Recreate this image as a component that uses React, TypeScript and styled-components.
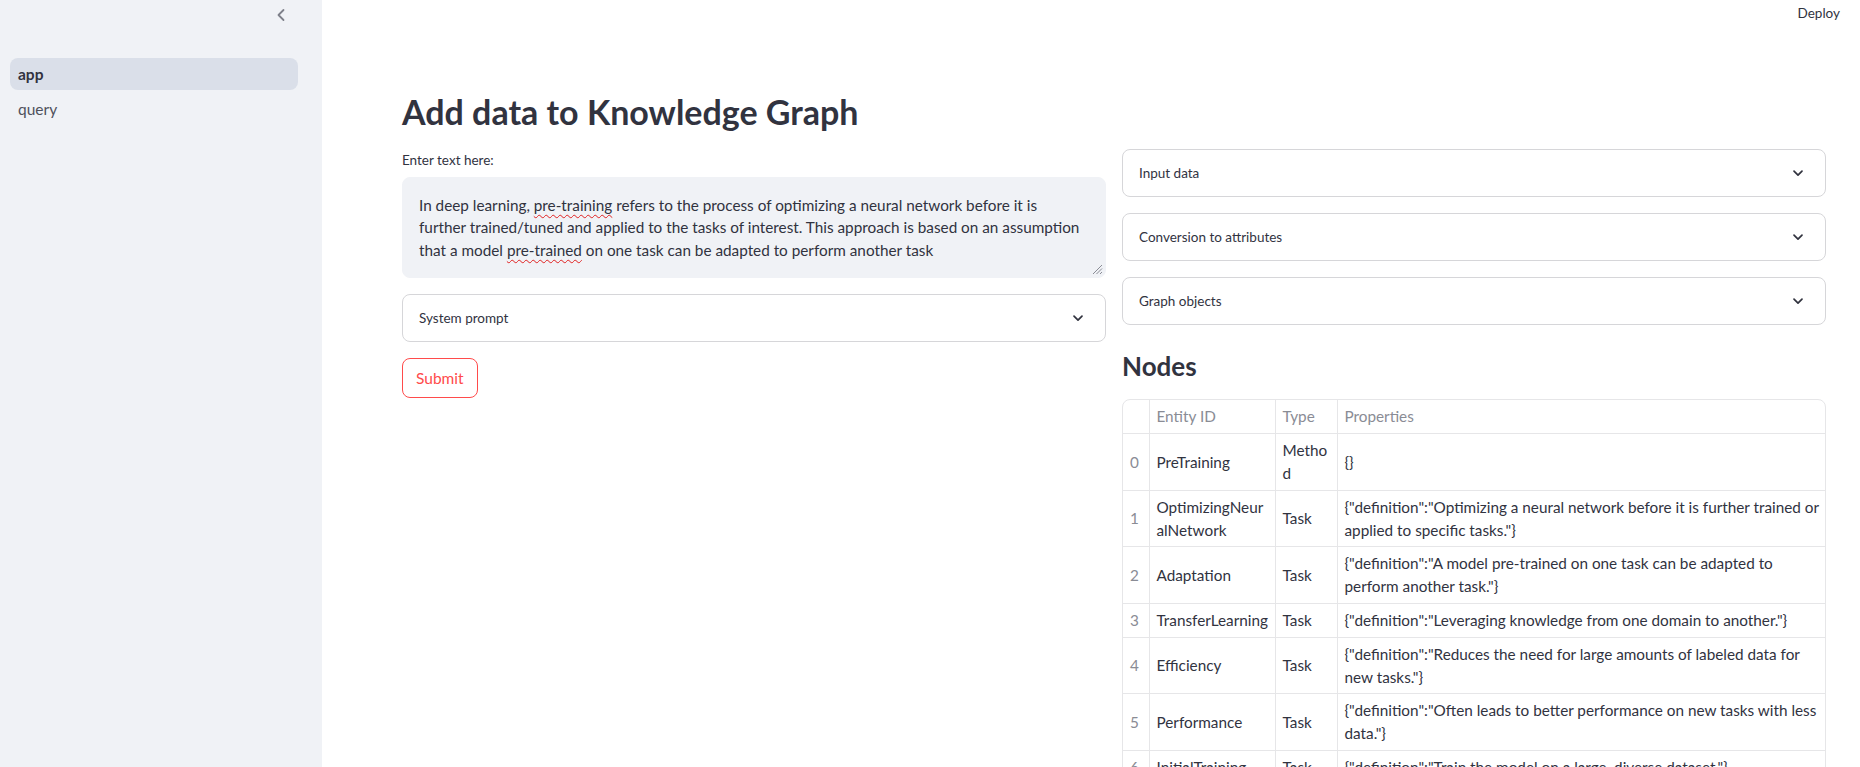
import React from "react";
import styled, { createGlobalStyle } from "styled-components";

const GlobalStyle = createGlobalStyle`
  html, body { margin: 0; padding: 0; }
  body {
    font-family: Lato, "Noto Sans", "DejaVu Sans", sans-serif;
    color: #31333f;
    background: #ffffff;
    overflow: hidden;
  }
  *, *::before, *::after { box-sizing: border-box; }
`;

const Shell = styled.div`
  display: grid;
  grid-template-columns: 322px 1fr;
  height: 100vh;
  overflow: hidden;
`;

const Sidebar = styled.aside`
  background: #f0f2f6;
  display: flex;
  flex-direction: column;
  padding: 0 24px 0 10px;
`;

const SidebarHeader = styled.div`
  height: 58px;
  display: flex;
  justify-content: flex-end;
  align-items: flex-start;
  padding: 7px 9px 0 0;
  color: #7e808a;
`;

const NavList = styled.nav`
  display: flex;
  flex-direction: column;
  gap: 3px;
`;

const NavLink = styled.a<{ $active?: boolean }>`
  height: 32px;
  display: flex;
  align-items: center;
  padding: 0 8px;
  border-radius: 8px;
  font-size: 15.5px;
  font-weight: ${(p) => (p.$active ? 700 : 400)};
  color: ${(p) => (p.$active ? "#31333f" : "#4f515c")};
  background: ${(p) => (p.$active ? "#dadfe9" : "transparent")};
  text-decoration: none;
`;

const Main = styled.main`
  display: flex;
  flex-direction: column;
  min-width: 0;
  overflow: hidden;
`;

const TopBar = styled.header`
  height: 26px;
  display: flex;
  justify-content: flex-end;
  align-items: flex-start;
  padding: 5px 20px 0 0;
  font-size: 13.5px;
  line-height: 17px;
  color: #31333f;
`;

const Content = styled.div`
  padding: 0 34px 0 80px;
`;

const Title = styled.h1`
  margin: 70px 0 16px;
  font-size: 34px;
  line-height: 1.2;
  font-weight: 700;
  color: #31333f;
`;

const Columns = styled.div`
  display: grid;
  grid-template-columns: 704px 704px;
  gap: 16px;
  align-items: start;
`;

const Column = styled.div`
  display: flex;
  flex-direction: column;
  gap: 16px;
`;

const Field = styled.div`
  display: flex;
  flex-direction: column;
`;

const Label = styled.label`
  font-size: 13.5px;
  line-height: 22.4px;
  margin-bottom: 5.6px;
  color: #31333f;
`;

const TextBox = styled.div`
  position: relative;
  background: #f0f2f6;
  border: 1px solid #f0f2f6;
  border-radius: 8px;
  padding: 16px 16px;
  font-size: 15.3px;
  line-height: 22.5px;
  color: #31333f;
  white-space: nowrap;
`;

const TextLine = styled.div``;

const Misspelled = styled.span`
  text-decoration: underline wavy #e02020;
  text-decoration-thickness: 1px;
  text-underline-offset: 3px;
`;

const ResizeHandle = styled.svg`
  position: absolute;
  right: 2px;
  bottom: 2px;
`;

const Expander = styled.div`
  height: 48px;
  border: 1px solid #d6d6d9;
  border-radius: 8px;
  display: flex;
  align-items: center;
  justify-content: space-between;
  padding: 0 19px 0 16px;
  font-size: 13.5px;
  color: #31333f;
  background: #fff;
`;

const SubmitButton = styled.button`
  align-self: flex-start;
  height: 40px;
  padding: 0 13px;
  border: 1px solid #ff4b4b;
  border-radius: 8px;
  background: #fff;
  color: #ff4b4b;
  font-family: inherit;
  font-size: 15.5px;
`;

const Heading = styled.h3`
  margin: 10px 0 1.5px;
  font-size: 26px;
  line-height: 1.2;
  font-weight: 700;
  color: #31333f;
`;

const TableFrame = styled.div`
  border: 1px solid #e6e6e8;
  border-radius: 8px;
  overflow: hidden;
`;

const Table = styled.table`
  width: 100%;
  border-collapse: collapse;
  table-layout: fixed;
  font-size: 15.3px;
  line-height: 22.8px;
`;

const Cell = styled.td<{ $muted?: boolean }>`
  padding: 5px 6px 5px 7px;
  border-right: 1px solid #e6e6e8;
  border-bottom: 1px solid #e6e6e8;
  vertical-align: middle;
  white-space: nowrap;
  overflow: hidden;
  color: ${(p) => (p.$muted ? "#8a8c95" : "#31333f")};
  &:last-child { border-right: none; }
`;

const HeadCell = styled.th`
  padding: 5px 6px 5px 7px;
  border-right: 1px solid #e6e6e8;
  border-bottom: 1px solid #e6e6e8;
  text-align: left;
  font-weight: 400;
  color: #8a8c95;
  white-space: nowrap;
  &:last-child { border-right: none; }
`;

const Chevron = () => (
  <svg width="16" height="16" viewBox="0 0 16 16" fill="none">
    <path d="M4 6.2 L8 10.2 L12 6.2" stroke="#31333f" strokeWidth="1.7" strokeLinecap="round" strokeLinejoin="round" />
  </svg>
);

const Lines = ({ lines }: { lines: string[] }) => (
  <>
    {lines.map((l, i) => (
      <div key={i}>{l}</div>
    ))}
  </>
);

const rows: { id: string[]; type: string[]; props: string[] }[] = [
  { id: ["PreTraining"], type: ["Metho", "d"], props: ["{}"] },
  {
    id: ["OptimizingNeur", "alNetwork"],
    type: ["Task"],
    props: [
      '{"definition":"Optimizing a neural network before it is further trained or',
      'applied to specific tasks."}',
    ],
  },
  {
    id: ["Adaptation"],
    type: ["Task"],
    props: ['{"definition":"A model pre-trained on one task can be adapted to', 'perform another task."}'],
  },
  { id: ["TransferLearning"], type: ["Task"], props: ['{"definition":"Leveraging knowledge from one domain to another."}'] },
  {
    id: ["Efficiency"],
    type: ["Task"],
    props: ['{"definition":"Reduces the need for large amounts of labeled data for', 'new tasks."}'],
  },
  {
    id: ["Performance"],
    type: ["Task"],
    props: ['{"definition":"Often leads to better performance on new tasks with less', 'data."}'],
  },
  { id: ["InitialTraining"], type: ["Task"], props: ['{"definition":"Train the model on a large, diverse dataset."}'] },
];

export default function App() {
  return (
    <>
      <GlobalStyle />
      <Shell>
        <Sidebar>
          <SidebarHeader>
            <svg width="16" height="16" viewBox="0 0 16 16" fill="none">
              <path d="M10.5 3 L5.5 8 L10.5 13" stroke="currentColor" strokeWidth="1.8" strokeLinecap="round" strokeLinejoin="round" />
            </svg>
          </SidebarHeader>
          <NavList>
            <NavLink $active href="#">app</NavLink>
            <NavLink href="#">query</NavLink>
          </NavList>
        </Sidebar>
        <Main>
          <TopBar>Deploy</TopBar>
          <Content>
            <Title>Add data to Knowledge Graph</Title>
            <Columns>
              <Column>
                <Field>
                  <Label>Enter text here:</Label>
                  <TextBox role="textbox" aria-multiline="true">
                    <TextLine>
                      In deep learning, <Misspelled>pre-training</Misspelled> refers to the process of optimizing a neural network before it is
                    </TextLine>
                    <TextLine>
                      further trained/tuned and applied to the tasks of interest. This approach is based on an assumption
                    </TextLine>
                    <TextLine>
                      that a model <Misspelled>pre-trained</Misspelled> on one task can be adapted to perform another task
                    </TextLine>
                    <ResizeHandle width="12" height="12" viewBox="0 0 12 12">
                      <path d="M11 2 L2 11 M11 5.5 L5.5 11 M11 9 L9 11" stroke="#8a8c95" strokeWidth="1" />
                    </ResizeHandle>
                  </TextBox>
                </Field>
                <Expander>
                  <span>System prompt</span>
                  <Chevron />
                </Expander>
                <SubmitButton>Submit</SubmitButton>
              </Column>
              <Column>
                <Expander>
                  <span>Input data</span>
                  <Chevron />
                </Expander>
                <Expander>
                  <span>Conversion to attributes</span>
                  <Chevron />
                </Expander>
                <Expander>
                  <span>Graph objects</span>
                  <Chevron />
                </Expander>
                <Heading>Nodes</Heading>
                <TableFrame>
                  <Table>
                    <colgroup>
                      <col style={{ width: 26 }} />
                      <col style={{ width: 126 }} />
                      <col style={{ width: 62 }} />
                      <col />
                    </colgroup>
                    <thead>
                      <tr>
                        <HeadCell></HeadCell>
                        <HeadCell>Entity ID</HeadCell>
                        <HeadCell>Type</HeadCell>
                        <HeadCell>Properties</HeadCell>
                      </tr>
                    </thead>
                    <tbody>
                      {rows.map((r, i) => (
                        <tr key={i}>
                          <Cell $muted>{i}</Cell>
                          <Cell><Lines lines={r.id} /></Cell>
                          <Cell><Lines lines={r.type} /></Cell>
                          <Cell><Lines lines={r.props} /></Cell>
                        </tr>
                      ))}
                    </tbody>
                  </Table>
                </TableFrame>
              </Column>
            </Columns>
          </Content>
        </Main>
      </Shell>
    </>
  );
}
